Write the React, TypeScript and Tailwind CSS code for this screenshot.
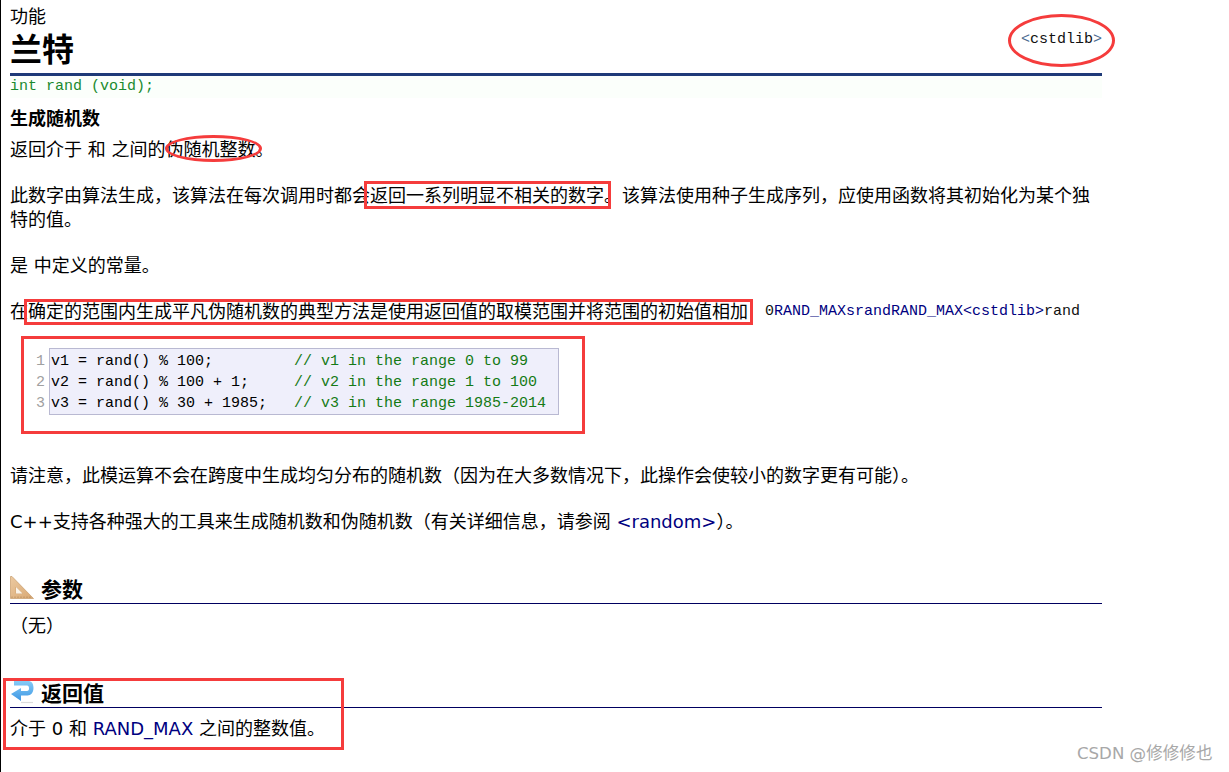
const sans = "font-['DejaVu_Sans','Noto_Sans_CJK_SC',sans-serif]"
const mono = "font-['Liberation_Mono','Noto_Sans_CJK_SC',monospace]"

const code = [
  { src: "v1 = rand() % 100;        ", note: " // v1 in the range 0 to 99" },
  { src: "v2 = rand() % 100 + 1;    ", note: " // v2 in the range 1 to 100" },
  { src: "v3 = rand() % 30 + 1985;  ", note: " // v3 in the range 1985-2014" },
]

function RulerIcon() {
  return (
    <svg width="24" height="24" viewBox="0 0 24 24" className="mb-[4px] shrink-0">
      <defs>
        <linearGradient id="wood" x1="0" y1="0" x2="1" y2="1">
          <stop offset="0" stopColor="#ecc9a0" />
          <stop offset="1" stopColor="#d8a873" />
        </linearGradient>
      </defs>
      <path fillRule="evenodd" d="M0.5 0.5 H2 L23.5 22.5 H0.5 Z M6 11 V17.5 H12.5 Z" fill="url(#wood)" stroke="#c79c6c" strokeWidth="0.7" />
      <path d="M6 11 V17.5 H12.5 Z" fill="#fbf4ea" />
      <path d="M2 22 V20.5 M5 22 V20.5 M8 22 V20.5 M11 22 V20.5 M14 22 V20.5 M17 22 V20.5 M20 22 V20.5" stroke="#a97e50" strokeWidth="0.7" />
    </svg>
  )
}

function ReturnIcon() {
  return (
    <svg width="24" height="24" viewBox="0 0 24 24" className="mb-[4px] shrink-0">
      <defs>
        <linearGradient id="arrow" x1="0" y1="0" x2="0" y2="1">
          <stop offset="0" stopColor="#86cbf6" />
          <stop offset="1" stopColor="#3d97e4" />
        </linearGradient>
      </defs>
      <path d="M4 1 H18 C21.5 1 23.5 3.5 23.5 8 C23.5 12.5 21 15.5 17.5 15.5 H11 V21 L1 14 L11 8 V11 H17 C18.5 11 19 10 19 8.2 C19 6.5 18.3 5.5 17 5.5 H4 Z" fill="url(#arrow)" />
      <path d="M11 22.5 H23" stroke="#dcdcdc" strokeWidth="1.2" />
    </svg>
  )
}

function Mark({ className }: { className: string }) {
  return <div className={`pointer-events-none absolute border-[3px] border-[#f53c3c] ${className}`} />
}

export default function App() {
  return (
    <div className={`relative h-[772px] w-[1229px] overflow-hidden bg-white text-[18px] leading-6 text-black ${sans}`}>
      <div className="h-full w-[1102px] border-l border-black pl-[9px]">
        <div className="pt-[5px]">功能</div>
        <div className="flex items-start justify-between">
          <h1 className="mt-[1px] text-[32px] leading-[40px] font-bold">兰特</h1>
          <span className={`mt-[-1px] text-[15px] leading-6 text-[#111] ${mono}`}>
            <span className="text-[#4a6a90]">&lt;</span>cstdlib<span className="text-[#4a6a90]">&gt;</span>
          </span>
        </div>
        <div className="mt-[3px] h-[3px] bg-[#1f3a78]" />
        <div className={`h-[22px] bg-[#fbfffb] text-[15px] leading-[22px] text-[#1a8a2e] ${mono}`}>int rand (void);</div>

        <div className="mt-[9px] font-bold">生成随机数</div>
        <p className="mt-[7px]">返回介于 和 之间的伪随机整数。</p>
        <p className="mt-[22px]">此数字由算法生成，该算法在每次调用时都会返回一系列明显不相关的数字。该算法使用种子生成序列，应使用函数将其初始化为某个独特的值。</p>
        <p className="mt-[22px]">是 中定义的常量。</p>
        <p className="mt-[22px] flex items-center">
          <span>在确定的范围内生成平凡伪随机数的典型方法是使用返回值的取模范围并将范围的初始值相加</span>
          <span className={`ml-[17px] text-[15px] text-[#111] ${mono}`}>
            0<span className="text-[#000080]">RAND_MAX</span>
            <span className="text-[#000080]">srand</span>
            <span className="text-[#000080]">RAND_MAX</span>
            <span className="text-[#000080]">&lt;cstdlib&gt;</span>rand
          </span>
        </p>

        <div className={`mt-[24px] ml-[26px] flex text-[15px] leading-[21px] ${mono}`}>
          <div className="w-[13px] pt-[3px] text-[#a0a0a0]">
            {code.map((_, i) => (
              <div key={i}>{i + 1}</div>
            ))}
          </div>
          <div className="h-[67px] w-[510px] border border-[#b9b9d2] bg-[#efeffb] pt-[2px] pl-[1px] whitespace-pre">
            {code.map(row => (
              <div key={row.src}>
                {row.src}
                <span className="text-[#157a15]">{row.note}</span>
              </div>
            ))}
          </div>
        </div>

        <p className="mt-[49px]">请注意，此模运算不会在跨度中生成均匀分布的随机数（因为在大多数情况下，此操作会使较小的数字更有可能）。</p>
        <p className="mt-[22px]">
          C++支持各种强大的工具来生成随机数和伪随机数（有关详细信息，请参阅 <span className="text-[#000080]">&lt;random&gt;</span>）。
        </p>

        <h2 className="mt-[43px] flex h-[27px] items-center gap-[7px] border-b border-[#000060] pb-[1px] text-[21px] font-bold">
          <RulerIcon />
          参数
        </h2>
        <p className="mt-[10px]">（无）</p>

        <h2 className="mt-[43px] flex h-[27px] items-center gap-[7px] border-b border-[#000060] pb-[1px] text-[21px] font-bold">
          <ReturnIcon />
          返回值
        </h2>
        <p className="mt-[9px]">
          介于 0 和 <span className="text-[#000080]">RAND_MAX</span> 之间的整数值。
        </p>
      </div>

      <Mark className="top-[14px] left-[1008px] h-[53px] w-[107px] rounded-[50%]" />
      <Mark className="top-[135px] left-[165px] h-[27px] w-[97px] rounded-[50%]" />
      <Mark className="top-[181px] left-[364px] h-[28px] w-[247px]" />
      <Mark className="top-[299px] left-[24px] h-[26px] w-[729px]" />
      <Mark className="top-[336px] left-[21px] h-[98px] w-[564px]" />
      <Mark className="top-[678px] left-[3px] h-[72px] w-[341px]" />

      <div className="absolute top-[742px] left-[1077px] text-[16.6px] leading-6 text-[#a8a8a8]">CSDN @修修修也</div>
    </div>
  )
}
